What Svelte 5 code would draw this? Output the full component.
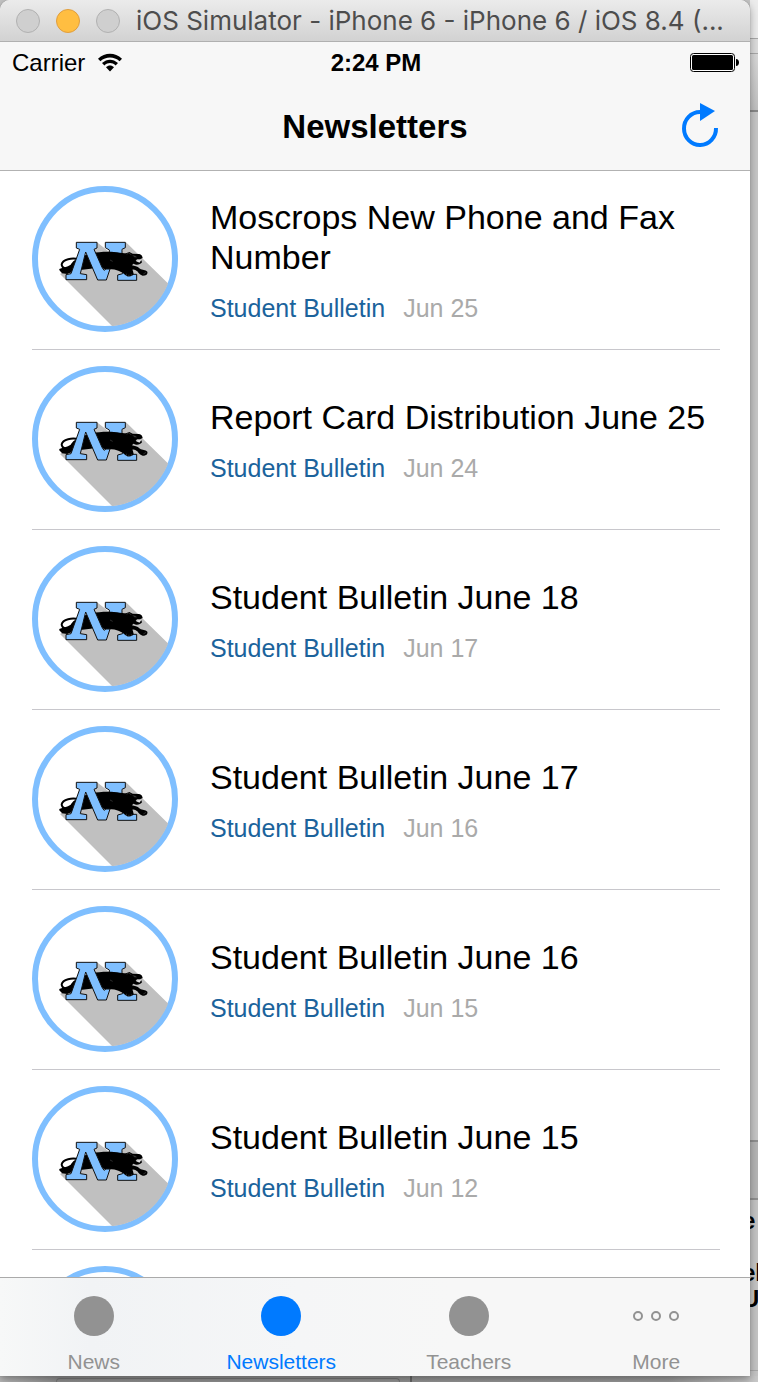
<script>
  const bulletins = [
    { title: 'Moscrops New Phone and Fax Number', date: 'Jun 25' },
    { title: 'Report Card Distribution June 25', date: 'Jun 24' },
    { title: 'Student Bulletin June 18', date: 'Jun 17' },
    { title: 'Student Bulletin June 17', date: 'Jun 16' },
    { title: 'Student Bulletin June 16', date: 'Jun 15' },
    { title: 'Student Bulletin June 15', date: 'Jun 12' }
  ];
  const tabs = ['News', 'Newsletters', 'Teachers', 'More'];
  let active = $state('Newsletters');
</script>

{#snippet logo()}
  <svg class="logo" viewBox="0 0 438 438" aria-hidden="true">
    <defs>
      <clipPath id="disc"><circle cx="219" cy="219" r="203" /></clipPath>
    </defs>
    <circle cx="219" cy="219" r="210" fill="#fff" stroke="#7fbfff" stroke-width="18" />
    <g clip-path="url(#disc)">
      <path d="M84 264 L102 282 L300 480 L500 400 L500 382 L282 169 L260 220 L195 169 L150 230 Z" fill="#c0c0c0" />
    </g>
    <g transform="translate(54 132)" stroke-linejoin="round">
      <path d="M166 37 H226 V53 L216 58 V76 H178 V60 L166 53 Z M220 108 L246 116 V133 H260 V151 H203 V135 L218 131 Z" fill="#7fbfff" stroke="#111" stroke-width="3" />
      <path d="M88 88 C66 83 38 87 35 103 C35 110 40 115 50 116" fill="none" stroke="#000" stroke-width="6" />
      <path d="M92 80 C76 87 68 94 62 104 C52 112 38 112 28 117 C26 124 36 125 35 130 L52 132 C63 126 78 126 84 121 L122 116 L145 112 L172 119 C192 115 203 121 213 126 C221 129 222 133 229 137 C236 142 249 139 251 132 L249 124 L246 119 C252 117 257 120 262 124 C266 130 271 136 278 137 C289 137 294 132 292 125 C286 118 278 121 270 116 C261 108 254 108 246 106 L250 101 L258 104 C266 105 272 102 276 97 L274 91 L268 97 L257 93 L261 88 L270 88 L278 84 C277 77 274 74 267 72 L248 71 L238 66 L230 69 C219 72 209 66 192 66 C166 64 143 67 125 69 Z" fill="#000" />
      <path d="M230 73 L236 69 L244 74 M248 77 L257 79 M252 80 L260 81 M229 137 L229 131 M236 140 L237 134 M244 139 L244 133 M180 90 L188 94 M280 132 L288 127" fill="none" stroke="#888" stroke-width="1" />
      <path d="M259 93 L268 98 L273 91 L268 90 Z" fill="#ddd" />
      <path d="M79 37 H141 V54 L132 58 L156 112 L162 121 L168 117 L180 117 L169 150 H143 L107 66 L91 131 L110 134 V149 H48 V134 L63 131 L89 58 L79 54 Z" fill="#7fbfff" stroke="#111" stroke-width="3" />
    </g>
  </svg>
{/snippet}

<div class="desktop">
  <main class="window">
    <header class="titlebar">
      <button class="light" aria-label="Close"></button>
      <button class="light amber" aria-label="Minimize"></button>
      <button class="light" aria-label="Zoom"></button>
      <span class="caption">iOS Simulator - iPhone 6 - iPhone 6 / iOS 8.4 (...</span>
    </header>

    <div class="top">
      <div class="status">
        <span class="carrier">Carrier
          <svg width="26" height="20" viewBox="0 0 26 20" aria-hidden="true">
            <path d="M1 5.7 C8 -0.8 18 -0.8 25 5.7 L22.6 8.2 C17 3.2 9 3.2 3.4 8.2 Z M5 10 C10 5.5 16 5.5 21 10 L18.6 12.5 C15 9.3 11 9.3 7.4 12.5 Z M9 14.2 C11.5 12 14.5 12 17 14.2 L13 18.4 Z" />
          </svg>
        </span>
        <time>2:24 PM</time>
        <svg class="battery" width="50" height="20" viewBox="0 0 50 20" aria-hidden="true">
          <rect x="0.5" y="0.5" width="44" height="18" rx="3" fill="#fff" stroke="#000" />
          <rect x="2" y="2" width="41" height="15" rx="1.5" />
          <path d="M46 6 C50 6 50 13 46 13 Z" />
        </svg>
      </div>
      <div class="nav">
        <h1>Newsletters</h1>
        <button class="refresh" aria-label="Refresh">
          <svg width="38" height="48" viewBox="0 0 38 48" aria-hidden="true">
            <path d="M19 9 A16 16.5 0 1 0 35 25" fill="none" stroke="#007aff" stroke-width="4" />
            <path d="M19 0 L34 8 L19 18 Z" fill="#007aff" />
          </svg>
        </button>
      </div>
    </div>

    <ul class="list">
      {#each bulletins as item}
        <li>
          {@render logo()}
          <div class="entry">
            <h2>{item.title}</h2>
            <p><a href="#bulletin">Student Bulletin</a><span>{item.date}</span></p>
          </div>
        </li>
      {/each}
      <li>{@render logo()}</li>
    </ul>

    <nav class="tabs">
      {#each tabs as tab}
        <button class="tab" class:active={tab === active} onclick={() => (active = tab)}>
          {#if tab === 'More'}
            <span class="dots"><i></i><i></i><i></i></span>
          {:else}
            <span class="dot"></span>
          {/if}
          {tab}
        </button>
      {/each}
    </nav>
  </main>

  <aside class="behind">
    <div class="strip one"></div>
    <div class="strip two"></div>
    <div class="strip three"></div>
    <div class="strip four"></div>
    <div class="strip five"></div>
    <div class="strip six"><span>e</span><span class="late">el</span><span>U:</span></div>
  </aside>
  <footer class="under"><div class="field"></div><div class="rest"></div></footer>
</div>

<style>
  :global(body) { margin: 0; background: #c4c4c4; }
  * { box-sizing: border-box; }
  button { font: inherit; padding: 0; border: 0; background: none; cursor: pointer; }
  .desktop {
    display: grid;
    grid-template-columns: minmax(0, 1fr) 8px;
    grid-template-rows: minmax(0, 1fr) 6px;
    height: 100vh;
    overflow: hidden;
    font-family: "Liberation Sans", Arial, sans-serif;
    color: #000;
  }
  .window {
    position: relative;
    z-index: 1;
    display: flex;
    flex-direction: column;
    min-height: 0;
    background: #fff;
    border-radius: 10px 10px 0 0;
    box-shadow: 0 0 1px #777, 0 3px 8px rgba(0, 0, 0, 0.35);
  }
  .titlebar {
    flex: none;
    display: flex;
    align-items: center;
    gap: 16px;
    height: 42px;
    padding: 0 16px;
    border-bottom: 1px solid #b0b0b0;
    border-radius: 10px 10px 0 0;
    background: linear-gradient(#ebebeb, #d2d2d2);
    font: 26px/40px Inter, sans-serif;
    color: #4d4d4d;
  }
  .light { flex: none; width: 24px; height: 24px; border: 1px solid #b1b1b1; border-radius: 50%; background: #cfcfcf; }
  .amber { border-color: #e09e3e; background: #ffbe41; }
  .caption { min-width: 0; overflow: hidden; white-space: nowrap; }
  .top { flex: none; background: #f7f7f7; border-bottom: 1px solid #b2b2b2; }
  .status, .nav { display: grid; grid-template-columns: 1fr auto 1fr; align-items: center; }
  .status { height: 42px; padding: 0 10px 0 12px; font-size: 24px; }
  .carrier { display: flex; align-items: center; gap: 12px; }
  time { font-weight: 700; }
  .battery { justify-self: end; }
  .nav { height: 86px; padding: 0 31px; }
  h1 { grid-column: 2; margin: 0; font-size: 33px; line-height: 40px; }
  .refresh { justify-self: end; }
  svg { display: block; flex: none; }
  .list { flex: 1; min-height: 0; margin: 0; padding: 0 30px 0 32px; overflow: hidden; list-style: none; }
  li { display: flex; align-items: center; gap: 32px; height: 180px; border-bottom: 1px solid #c8c7cc; }
  li:first-child { height: 179px; }
  .logo { width: 146px; height: 146px; margin-bottom: 2px; }
  .entry { flex: 1; min-width: 0; }
  h2 { margin: 0; font-size: 34px; line-height: 40px; font-weight: 400; }
  p { display: flex; gap: 18px; margin: 16px 0 0; font-size: 25px; line-height: 30px; color: #aaa; }
  a { color: #1b639c; text-decoration: none; }
  .tabs {
    flex: none;
    display: grid;
    grid-template-columns: repeat(4, 1fr);
    height: 99px;
    border-top: 1px solid #aaa;
    background: linear-gradient(90deg, #f7f8f8, #f1f3f5 12%, #f5f6f7 40%, #f7f7f7 60%);
  }
  .tab { display: flex; flex-direction: column; align-items: center; gap: 14px; padding-top: 18px; font-size: 21px; line-height: 24px; color: #929292; }
  .active { color: #007aff; }
  .dot { width: 40px; height: 40px; border-radius: 50%; background: currentColor; }
  .dots { display: flex; align-items: center; gap: 8px; height: 40px; }
  .dots i { width: 10px; height: 10px; border: 2px solid currentColor; border-radius: 50%; }
  .behind { display: flex; flex-direction: column; overflow: hidden; background: #c4c4c4; }
  .strip { flex: none; border-bottom: 1px solid #a8a8a8; }
  .one { height: 39px; background: #ececec; }
  .two { height: 15px; background: #dcdcdc; }
  .three { height: 58px; border-bottom: 2px solid #888; background: linear-gradient(#d8d8d8, #c0c0c0); }
  .four { flex: 1; border-bottom: 2px solid #909090; background: #c6c6c6; }
  .five { height: 58px; border-bottom: 2px solid #909090; background: #b5b5b5; }
  .six { height: 171px; margin-bottom: 5px; padding-top: 8px; font-size: 24px; font-weight: 700; line-height: 26px; }
  .six span { display: block; margin-left: -8px; white-space: nowrap; }
  .six .late { margin-top: 26px; }
  .under { grid-column: 1 / -1; display: flex; padding-left: 56px; background: linear-gradient(90deg, #b8b8b8, #8e8e8e 8%, #999 88%, #c8c8c8); }
  .field { flex: 0 0 49%; margin-top: 2px; border: 1px solid #777; border-bottom: 0; border-radius: 5px 5px 0 0; }
  .rest { flex: 1; margin-left: 10px; border-left: 2px solid #666; }
</style>
